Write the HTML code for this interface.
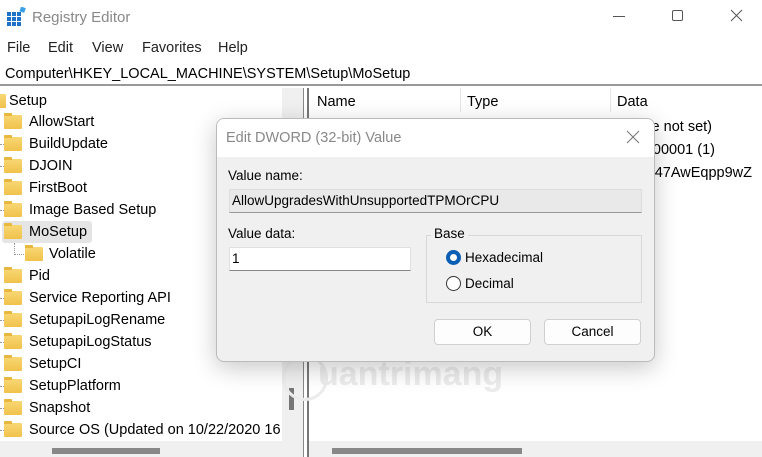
<!DOCTYPE html>
<html><head><meta charset="utf-8"><style>
*{margin:0;padding:0;box-sizing:border-box}
body{width:762px;height:457px;overflow:hidden;background:#fff;font-family:"Liberation Sans",sans-serif;position:relative;color:#000}
.abs{position:absolute}
.menu span{position:absolute;top:40px;font-size:14.5px;color:#222}
.tree div{position:absolute;left:0;height:22px;font-size:14.5px;line-height:22px;white-space:nowrap}
.fd{position:absolute;top:4px;width:18px;height:14px;background:linear-gradient(#f8d775,#f0c24a);border-radius:1px}
.fd:before{content:"";position:absolute;left:0;top:-2px;width:8px;height:3px;background:#e8b73e;border-radius:1px 1px 0 0}
.dots{position:absolute;border-top:1px dotted #999;width:4px;top:11px;left:0}
.rd{position:absolute;font-size:14.5px;text-align:right;white-space:nowrap}
</style></head><body>
<svg class="abs" style="left:7px;top:7px" width="20" height="20" viewBox="0 0 20 20">
<g fill="#1e73c8"><rect x="0" y="5" width="4" height="4"/><rect x="5" y="5" width="4" height="4"/><rect x="10" y="5" width="4" height="4"/><rect x="0" y="10" width="4" height="4"/><rect x="5" y="10" width="4" height="4"/><rect x="10" y="10" width="4" height="4"/><rect x="0" y="15" width="4" height="4"/><rect x="5" y="15" width="4" height="4"/><rect x="10" y="15" width="4" height="4"/></g>
<rect x="13" y="0" width="5" height="5" fill="#3aa0e8" transform="rotate(20 15 3)"/></svg>
<div class="abs" style="left:32px;top:9px;font-size:15px;color:#888">Registry Editor</div>
<div class="abs" style="left:613px;top:16px;width:12px;height:1px;background:#555"></div>
<div class="abs" style="left:672px;top:10px;width:11px;height:11px;border:1px solid #555;border-radius:2px"></div>
<svg class="abs" style="left:730px;top:9px" width="13" height="13"><path d="M1 1L12 12M12 1L1 12" stroke="#555" stroke-width="1"/></svg>
<div class="menu"><span style="left:7px">File</span><span style="left:48px">Edit</span><span style="left:92px">View</span><span style="left:142px">Favorites</span><span style="left:218px">Help</span></div>
<div class="abs" style="left:0;top:61px;width:762px;height:25px;border-bottom:2px solid #999"></div>
<div class="abs" style="left:5px;top:66px;font-size:14.5px">Computer\HKEY_LOCAL_MACHINE\SYSTEM\Setup\MoSetup</div>
<div class="abs" style="left:282px;top:88px;width:22px;height:369px;background:#f0f0f0"></div>
<div class="abs" style="left:289px;top:388px;width:5px;height:22px;background:#777"></div>
<div class="abs" style="left:303px;top:88px;width:1px;height:369px;background:#888"></div>
<div class="abs" style="left:307px;top:88px;width:2px;height:369px;background:#777"></div>
<div class="abs" style="left:0;top:441px;width:282px;height:16px;background:#f0f0f0"></div>
<div class="abs" style="left:52px;top:448px;width:108px;height:6px;background:#888"></div>
<div class="abs" style="left:309px;top:441px;width:453px;height:16px;background:#f0f0f0"></div>
<div class="abs" style="left:332px;top:448px;width:190px;height:6px;background:#888"></div>
<div class="abs" style="left:317px;top:94px;font-size:14.5px">Name</div>
<div class="abs" style="left:460px;top:88px;width:1px;height:24px;background:#e5e5e5"></div>
<div class="abs" style="left:467px;top:94px;font-size:14.5px">Type</div>
<div class="abs" style="left:610px;top:88px;width:1px;height:24px;background:#e5e5e5"></div>
<div class="abs" style="left:617px;top:94px;font-size:14.5px">Data</div>
<div class="rd" style="right:50px;top:119px">(value not set)</div>
<div class="rd" style="right:47px;top:142px">0x00000001 (1)</div>
<div class="rd" style="right:10px;top:165px">fS5947AwEqpp9wZ</div>
<div class="tree">
<div style="top:90px;left:0"><span class="fd" style="left:-12px"></span><span style="position:absolute;left:9px">Setup</span></div>
<div style="top:111px"><span class="fd" style="left:4px"></span><span style="position:absolute;left:29px">AllowStart</span></div>
<div style="top:133px"><span class="dots"></span><span class="fd" style="left:4px"></span><span style="position:absolute;left:29px">BuildUpdate</span></div>
<div style="top:155px"><span class="dots"></span><span class="fd" style="left:4px"></span><span style="position:absolute;left:29px">DJOIN</span></div>
<div style="top:177px"><span class="fd" style="left:4px"></span><span style="position:absolute;left:29px">FirstBoot</span></div>
<div style="top:199px"><span class="dots"></span><span class="fd" style="left:4px"></span><span style="position:absolute;left:29px">Image Based Setup</span></div>
<div style="top:221px;left:2px;width:90px;background:#e5e5e5;border-radius:3px"></div>
<div style="top:221px"><span class="fd" style="left:4px"></span><span style="position:absolute;left:29px">MoSetup</span></div>
<div style="top:243px"><span style="position:absolute;left:14px;top:0;height:12px;border-left:1px dotted #999"></span><span style="position:absolute;left:14px;top:11px;width:10px;border-top:1px dotted #999"></span><span class="fd" style="left:25px"></span><span style="position:absolute;left:49px">Volatile</span></div>
<div style="top:265px"><span class="fd" style="left:4px"></span><span style="position:absolute;left:29px">Pid</span></div>
<div style="top:287px"><span class="dots"></span><span class="fd" style="left:4px"></span><span style="position:absolute;left:29px">Service Reporting API</span></div>
<div style="top:309px"><span class="dots"></span><span class="fd" style="left:4px"></span><span style="position:absolute;left:29px">SetupapiLogRename</span></div>
<div style="top:331px"><span class="dots"></span><span class="fd" style="left:4px"></span><span style="position:absolute;left:29px">SetupapiLogStatus</span></div>
<div style="top:353px"><span class="fd" style="left:4px"></span><span style="position:absolute;left:29px">SetupCI</span></div>
<div style="top:375px"><span class="dots"></span><span class="fd" style="left:4px"></span><span style="position:absolute;left:29px">SetupPlatform</span></div>
<div style="top:397px"><span class="dots"></span><span class="fd" style="left:4px"></span><span style="position:absolute;left:29px">Snapshot</span></div>
<div style="top:419px;width:282px;overflow:hidden"><span class="dots"></span><span class="fd" style="left:4px"></span><span style="position:absolute;left:29px">Source OS (Updated on 10/22/2020 16</span></div>
</div>
<div class="abs" style="left:282px;top:355px;width:46px;height:46px;border:3px solid #ececec;border-radius:50%"></div>
<div class="abs" style="left:318px;top:355px;font-size:34px;color:#ececec;font-weight:bold;letter-spacing:0px">uantrimang</div>
<div class="abs" style="left:216px;top:118px;width:439px;height:244px;background:#f0f0f0;border:1px solid #bbb;border-radius:8px;box-shadow:0 6px 24px rgba(0,0,0,.22);overflow:hidden">
<div style="position:absolute;left:0;top:0;width:100%;height:38px;background:#fff"></div>
<div style="position:absolute;left:9px;top:11px;font-size:14.5px;color:#888">Edit DWORD (32-bit) Value</div>
<svg style="position:absolute;left:409px;top:11px" width="14" height="14"><path d="M1 1L13 13M13 1L1 13" stroke="#777" stroke-width="1"/></svg>
<div style="position:absolute;left:11px;top:49px;font-size:13.5px">Value name:</div>
<div style="position:absolute;left:12px;top:70px;width:413px;height:24px;background:#e9e9e9;border:1px solid #ddd;border-bottom-color:#999;font-size:13.5px;padding:3px 2px">AllowUpgradesWithUnsupportedTPMOrCPU</div>
<div style="position:absolute;left:11px;top:107px;font-size:13.5px">Value data:</div>
<div style="position:absolute;left:12px;top:128px;width:182px;height:24px;background:#fff;border:1px solid #e0e0e0;border-bottom-color:#888;font-size:13.5px;padding:3px 2px">1</div>
<div style="position:absolute;left:209px;top:116px;width:216px;height:68px;border:1px solid #d8d8d8"></div>
<div style="position:absolute;left:214px;top:107px;padding:0 3px;background:#f0f0f0;font-size:13.5px">Base</div>
<div style="position:absolute;left:229px;top:131px;width:15px;height:15px;border-radius:50%;background:#0a5fb4"><div style="position:absolute;left:4px;top:4px;width:7px;height:7px;border-radius:50%;background:#fff"></div></div>
<div style="position:absolute;left:248px;top:131px;font-size:13.5px">Hexadecimal</div>
<div style="position:absolute;left:229px;top:157px;width:15px;height:15px;border-radius:50%;border:1px solid #333;background:#fff"></div>
<div style="position:absolute;left:248px;top:157px;font-size:13.5px">Decimal</div>
<div style="position:absolute;left:217px;top:200px;width:97px;height:26px;background:#fdfdfd;border:1px solid #d0d0d0;border-radius:4px;font-size:13.5px;text-align:center;line-height:24px">OK</div>
<div style="position:absolute;left:327px;top:200px;width:97px;height:26px;background:#fdfdfd;border:1px solid #d0d0d0;border-radius:4px;font-size:13.5px;text-align:center;line-height:24px">Cancel</div>
</div>
</body></html>
